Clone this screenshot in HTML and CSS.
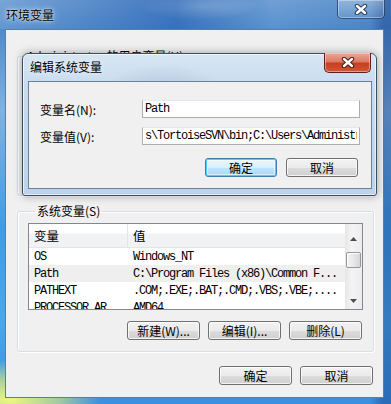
FILE: index.html
```html
<!DOCTYPE html>
<html lang="zh-CN">
<head>
    <meta charset="UTF-8">
    <title>环境变量</title>
    <link rel="stylesheet" href="styles.css">
</head>
<body>
    <div class="window">
        <div class="titlebar">
            <span class="title">环境变量</span>
            <button class="caption-close" aria-label="关闭">
                <svg width="14" height="11" viewBox="0 0 14 11">
                    <path d="M3 2 L11 9 M11 2 L3 9" stroke="#2b3d55" stroke-width="4.4" stroke-linecap="round"/>
                    <path d="M3 2 L11 9 M11 2 L3 9" stroke="#fff" stroke-width="2.4" stroke-linecap="round"/>
                </svg>
            </button>
        </div>

        <div class="client">
            <fieldset class="group user-group">
                <legend>Administrator 的用户变量(U)</legend>
            </fieldset>

            <fieldset class="group sys-group">
                <legend>系统变量(S)</legend>
                <div class="listview">
                    <div class="list-main">
                        <div class="list-head">
                            <span class="col-name">变量</span>
                            <span class="col-val">值</span>
                        </div>
                        <div class="row"><span class="col-name">OS</span><span class="col-val">Windows_NT</span></div>
                        <div class="row row-hot"><span class="col-name">Path</span><span class="col-val">C:\Program Files (x86)\Common F...</span></div>
                        <div class="row"><span class="col-name">PATHEXT</span><span class="col-val">.COM;.EXE;.BAT;.CMD;.VBS;.VBE;....</span></div>
                        <div class="row"><span class="col-name">PROCESSOR_AR</span><span class="col-val">AMD64</span></div>
                    </div>
                    <div class="vscroll">
                        <div class="sb-arrow">
                            <svg width="7" height="4" viewBox="0 0 7 4"><path d="M0 4 L3.5 0 L7 4 Z" fill="#4d4d4d"/></svg>
                        </div>
                        <div class="sb-track">
                            <div class="sb-thumb"></div>
                        </div>
                        <div class="sb-arrow">
                            <svg width="7" height="4" viewBox="0 0 7 4"><path d="M0 0 L7 0 L3.5 4 Z" fill="#4d4d4d"/></svg>
                        </div>
                    </div>
                </div>
                <div class="btn-row">
                    <button class="btn">新建(W)...</button>
                    <button class="btn">编辑(I)...</button>
                    <button class="btn">删除(L)</button>
                </div>
            </fieldset>

            <div class="btn-row dialog-actions">
                <button class="btn">确定</button>
                <button class="btn">取消</button>
            </div>
        </div>

        <div class="edit-dialog">
            <div class="edit-titlebar">
                <span class="edit-title">编辑系统变量</span>
                <button class="edit-close" aria-label="关闭">
                    <svg width="14" height="11" viewBox="0 0 14 11">
                        <path d="M3 2 L11 9 M11 2 L3 9" stroke="#4a1a12" stroke-width="4.4" stroke-linecap="round"/>
                        <path d="M3 2 L11 9 M11 2 L3 9" stroke="#fff" stroke-width="2.4" stroke-linecap="round"/>
                    </svg>
                </button>
            </div>
            <div class="edit-client">
                <div class="field">
                    <label for="varName">变量名(N):</label>
                    <input type="text" id="varName" value="Path">
                </div>
                <div class="field">
                    <label for="varValue">变量值(V):</label>
                    <input type="text" id="varValue" value="s\TortoiseSVN\bin;C:\Users\Administr">
                </div>
                <div class="btn-row edit-actions">
                    <button class="btn btn-default">确定</button>
                    <button class="btn">取消</button>
                </div>
            </div>
        </div>
    </div>
</body>
</html>
```

FILE: styles.css
```css
:root {
    --face: #f0f0f0;
    --cjk: "Noto Sans CJK SC", "Noto Sans", sans-serif;
    --mono: "Liberation Mono", "DejaVu Sans Mono", monospace;
}

* {
    box-sizing: border-box;
}

body {
    margin: 0;
    overflow: hidden;
    font-family: var(--cjk);
    font-size: 12px;
    color: #000;
}

/* outer aero window */
.window {
    position: relative;
    width: 391px;
    height: 404px;
    overflow: hidden;
    display: flex;
    flex-direction: column;
    background:
        radial-gradient(ellipse 90px 40px at 10px 400px, #eef77e 0%, rgba(230, 240, 120, 0.6) 55%, rgba(230, 240, 120, 0) 100%),
        radial-gradient(ellipse 60px 14px at 200px 6px, rgba(255, 255, 255, 0.35), rgba(255, 255, 255, 0)),
        linear-gradient(90deg, rgba(255, 255, 255, 0) 0, rgba(255, 255, 255, 0) 370px, rgba(10, 40, 110, 0.35) 383px),
        linear-gradient(180deg, #6a9bd2 0, #4f8bcc 30px, #7fb2e0 110px, #3f9ce6 230px, #4aa8ea 320px, #3b8fe0 404px);
}

.titlebar {
    height: 29px;
    display: flex;
    align-items: flex-start;
    flex-shrink: 0;
    background: linear-gradient(90deg, rgba(255, 255, 255, 0.1) 0, rgba(20, 80, 170, 0.45) 45%, rgba(255, 255, 255, 0.05) 70%, rgba(30, 90, 170, 0.2) 100%);
}

.title {
    padding: 7px 0 0 6px;
    line-height: 16px;
    font-size: 12px;
    text-shadow: 0 0 6px rgba(255, 255, 255, 0.9), 0 0 2px rgba(255, 255, 255, 0.9);
}

.caption-close {
    margin: 0 6px 0 auto;
    width: 48px;
    height: 19px;
    padding: 0;
    display: flex;
    align-items: center;
    justify-content: center;
    border: 1px solid rgba(25, 45, 80, 0.7);
    border-top: 0;
    border-radius: 0 0 5px 5px;
    background: linear-gradient(rgba(255, 255, 255, 0.3), rgba(255, 255, 255, 0.08));
    box-shadow: inset 0 0 0 1px rgba(255, 255, 255, 0.35);
}

.client {
    margin: 0 7px 6px 5px;
    flex: 1;
    background: var(--face);
    border: 1px solid #5d7c9e;
    display: flex;
    flex-direction: column;
    padding: 0 10px 0 11px;
}

/* group boxes */
.group {
    margin: 0;
    padding: 0;
    border: 1px solid #d5dfe5;
    border-radius: 3px;
    box-shadow: inset 1px 1px 0 #fff, 1px 1px 0 #fff;
}

.group legend {
    margin-left: 7px;
    padding: 0 2px;
    line-height: 14px;
    font-size: 12px;
}

.user-group {
    margin: 19px 0 8px;
    height: 147px;
}

.sys-group {
    height: 148px;
    margin-right: -1px;
    padding: 5px 11px 11px 10px;
    display: flex;
    flex-direction: column;
}

/* list view */
.listview {
    height: 87px;
    border: 1px solid #828790;
    background: #fff;
    display: flex;
    overflow: hidden;
    flex-shrink: 0;
    margin-right: -1px;
}

.list-main {
    flex: 1;
    min-width: 0;
}

.list-head {
    height: 24px;
    display: flex;
    align-items: center;
    background: linear-gradient(#fff 0, #fff 9px, #f1f2f4 10px, #f1f2f4 100%);
    border-bottom: 1px solid #e5e5e5;
    font-size: 12.5px;
}

.list-head .col-name {
    border-right: 1px solid #e3e5e8;
    height: 100%;
    display: flex;
    align-items: center;
}

.col-name {
    width: 99px;
    padding-left: 5px;
    flex-shrink: 0;
}

.col-val {
    padding-left: 5px;
    white-space: nowrap;
}

.row {
    height: 17px;
    display: flex;
    align-items: center;
    font-family: var(--mono);
    font-size: 12px;
    letter-spacing: -1.2px;
    white-space: nowrap;
}

.row-hot {
    background: #efefef;
}

.vscroll {
    width: 17px;
    flex-shrink: 0;
    display: flex;
    flex-direction: column;
    background: linear-gradient(90deg, #e6e6e6, #f4f4f4 40%, #ececec);
}

.sb-arrow {
    height: 17px;
    display: flex;
    align-items: center;
    justify-content: center;
    flex-shrink: 0;
}

.sb-arrow:first-child {
    height: 26px;
    padding-top: 4px;
}

.sb-track {
    flex: 1;
    padding: 2px 1px 0;
}

.sb-thumb {
    height: 16px;
    border: 1px solid #979797;
    border-radius: 2px;
    background: linear-gradient(90deg, #f4f4f4, #e8e8e8 50%, #d6d6d6);
    box-shadow: inset 1px 1px 0 #fff;
}

/* buttons */
.btn-row {
    display: flex;
    justify-content: flex-end;
    gap: 8px;
}

.sys-group .btn-row {
    margin-top: 11px;
}

.dialog-actions {
    margin-top: 14px;
}

.btn {
    width: 73px;
    height: 19px;
    padding: 0;
    font-family: var(--cjk);
    font-size: 12px;
    line-height: 15px;
    color: #000;
    border: 1px solid #707070;
    border-radius: 3px;
    background: linear-gradient(#f2f2f2 0, #ebebeb 50%, #dddddd 50%, #cfcfcf 100%);
    box-shadow: inset 0 0 0 1px rgba(255, 255, 255, 0.75);
}

.btn-default {
    border-color: #3c7fb1;
    background: linear-gradient(#eaf6fd 0, #d9f0fc 50%, #bee6fd 50%, #a7d9f5 100%);
    box-shadow: inset 0 0 0 1px #48d1ff, inset 0 0 0 2px rgba(255, 255, 255, 0.5);
}

/* edit dialog floating over the window */
.edit-dialog {
    position: absolute;
    left: 22px;
    top: 53px;
    width: 355px;
    height: 143px;
    border: 1px solid #3e4f63;
    border-radius: 6px 6px 3px 3px;
    padding: 0 4px 6px 5px;
    display: flex;
    flex-direction: column;
    background:
        radial-gradient(ellipse 60px 30px at 140px 40px, rgba(150, 170, 195, 0.45), rgba(150, 170, 195, 0)),
        linear-gradient(180deg, #d8e6f3 0, #c9dcef 30px, #bcd3ea 100%);
    box-shadow: inset 0 0 0 1px rgba(255, 255, 255, 0.6), 0 0 8px rgba(0, 0, 0, 0.35);
}

.edit-titlebar {
    height: 27px;
    display: flex;
    align-items: flex-start;
    flex-shrink: 0;
}

.edit-title {
    padding: 5px 0 0 2px;
    line-height: 16px;
    text-shadow: 0 0 6px rgba(255, 255, 255, 0.9);
}

.edit-close {
    margin: -1px 1px 0 auto;
    width: 47px;
    height: 20px;
    padding: 0;
    display: flex;
    align-items: center;
    justify-content: center;
    border: 1px solid #5b231a;
    border-top: 0;
    border-radius: 0 0 5px 5px;
    background: linear-gradient(#eba797 0, #dc7a63 45%, #c6401f 55%, #d2553a 100%);
    box-shadow: inset 0 0 0 1px rgba(255, 220, 210, 0.5);
}

.edit-client {
    flex: 1;
    background: var(--face);
    border: 1px solid #6c8098;
    padding: 18px 11px 0 11px;
    display: flex;
    flex-direction: column;
    gap: 9px;
}

.field {
    display: flex;
    align-items: center;
    height: 18px;
}

.field label {
    width: 102px;
    flex-shrink: 0;
}

.field input {
    width: 218px;
    height: 18px;
    padding: 0 2px;
    border: 1px solid #abadb3;
    border-top-color: #e3e9ef;
    background: #fff;
    font-family: var(--mono);
    font-size: 12px;
    letter-spacing: -1.2px;
    color: #000;
    outline: none;
}

.edit-actions {
    margin-top: 4px;
    padding-right: 2px;
    gap: 9px;
}

.edit-actions .btn {
    width: 72px;
}
```
